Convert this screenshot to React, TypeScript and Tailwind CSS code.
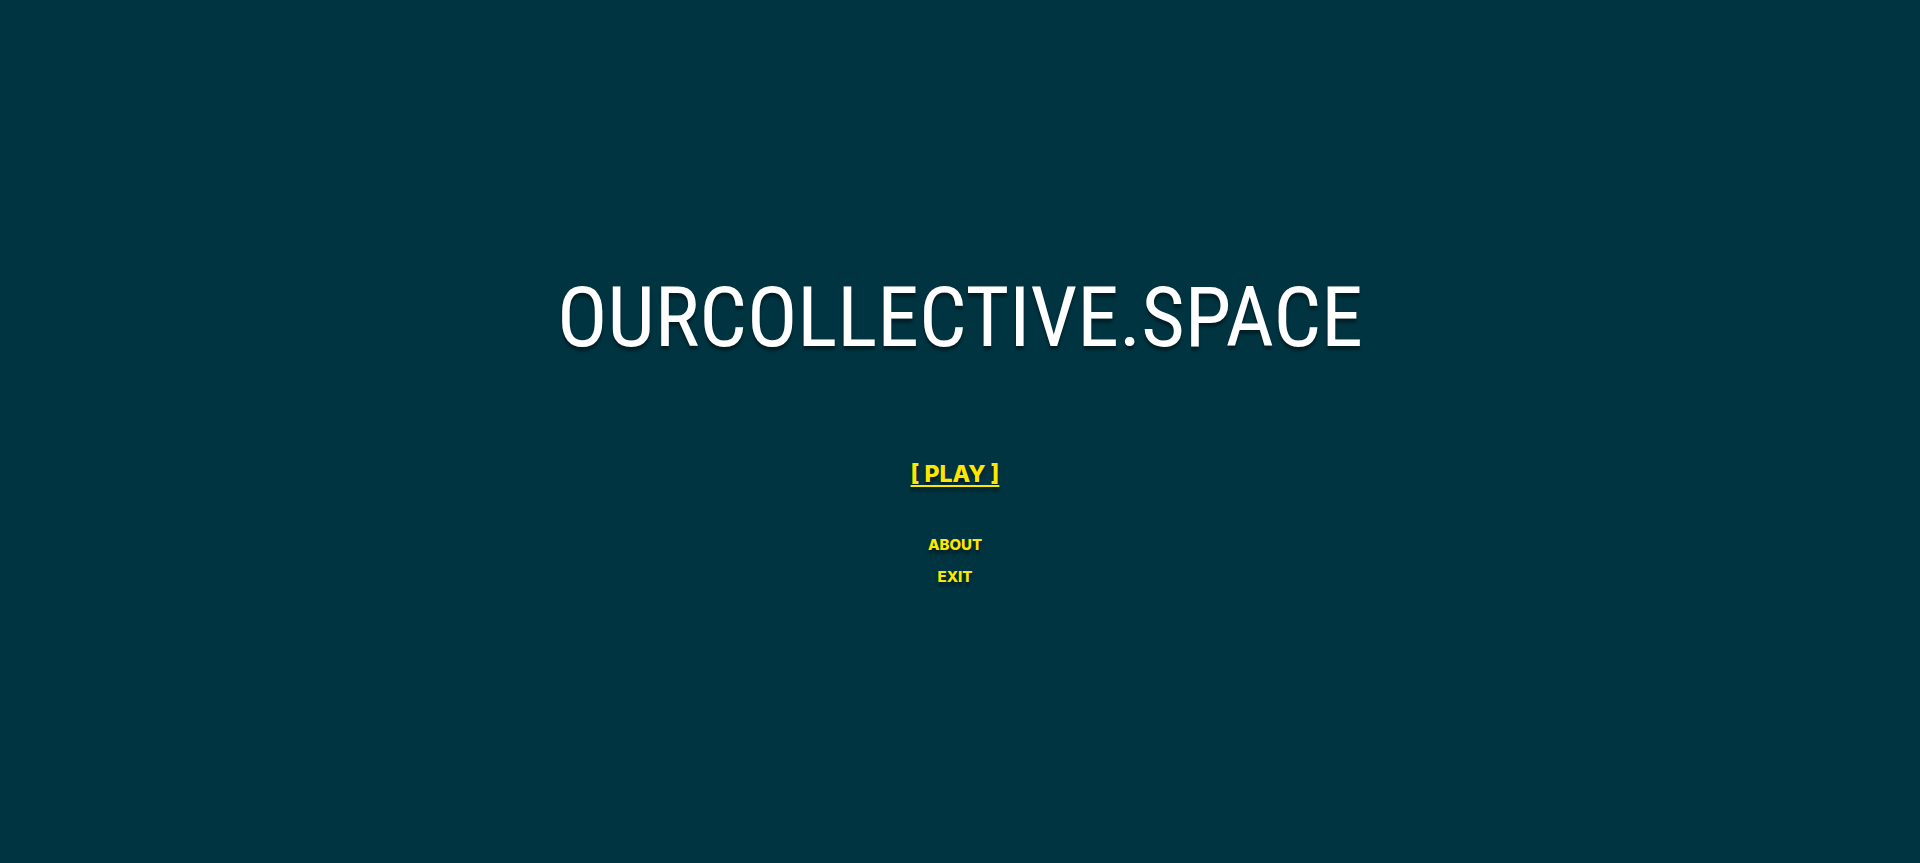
const linkClasses =
  "rounded-sm uppercase outline-none transition hover:text-white focus-visible:ring-2 focus-visible:ring-[#ffe600]";

const links = [
  { label: "About", href: "#about" },
  { label: "Exit", href: "#exit" },
];

export default function App() {
  return (
    <main className="flex min-h-screen flex-col items-center bg-[#003441] pt-[266px]">
      <h1 className="whitespace-nowrap font-['Roboto_Condensed','Roboto',sans-serif] text-[84px] leading-[104px] text-white [text-shadow:0_4px_3px_rgba(0,0,0,0.4)]">
        OURCOLLECTIVE.SPACE
      </h1>

      <nav className="mt-[88px] flex flex-col items-center pr-[10px] font-['Inter',sans-serif] font-extrabold text-[#ffe600] [text-shadow:0_4px_3px_rgba(0,0,0,0.4)]">
        <a
          href="#play"
          className={`${linkClasses} text-[23px] leading-[32px] underline decoration-2 underline-offset-[3px]`}
        >
          [ Play ]
        </a>
        <ul className="mt-[39px] text-center text-[15px] leading-[32px]">
          {links.map((link) => (
            <li key={link.href}>
              <a href={link.href} className={linkClasses}>
                {link.label}
              </a>
            </li>
          ))}
        </ul>
      </nav>
    </main>
  );
}
